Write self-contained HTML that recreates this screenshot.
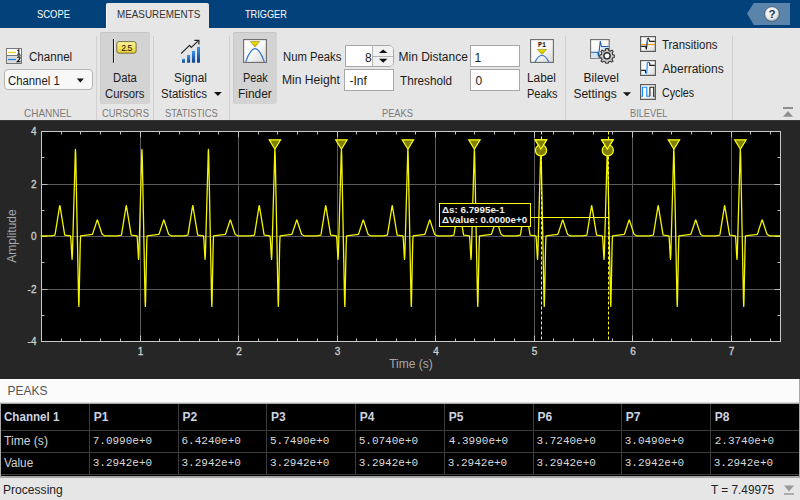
<!DOCTYPE html>
<html><head><meta charset="utf-8">
<style>
*{margin:0;padding:0;box-sizing:border-box}
html,body{width:800px;height:500px;overflow:hidden;background:#e6e6e6;font-family:"Liberation Sans",sans-serif;position:relative}
.a{position:absolute;white-space:nowrap}
.tb{position:absolute;left:0;top:0;width:800px;height:28px;background:#03417a}
.tab{position:absolute;top:10px;font-size:11px;color:#fff;line-height:1;letter-spacing:-0.3px}
.seltab{position:absolute;left:106px;top:3px;width:103px;height:26px;background:#e6e6e6;border-radius:2px 2px 0 0;border-left:1px solid #fafafa}
.lbl{font-size:12px;color:#1a1a1a;line-height:1}
.grp{font-size:10.5px;color:#7a7a7a;line-height:1;letter-spacing:-0.2px}
.sep{position:absolute;top:36px;width:1px;height:84px;background:#d0d0d0}
.press{position:absolute;background:#d3d3d3;border-radius:3px;box-shadow:inset 0 1px 0 #c4c4c4,inset 1px 0 0 #cacaca}
.fld{position:absolute;background:#fff;border:1px solid #a8a8a8}
.tbl{position:absolute;left:1px;top:404px;width:798px;height:72px;background:#000}
.th{font-size:12px;font-weight:bold;color:#c9d3e0;line-height:1}
.td{font-size:12px;color:#d0d0d0;line-height:1}
.mono{font-family:"Liberation Mono",monospace;font-size:10.7px;color:#d0d0d0;line-height:1}
</style></head><body>
<svg width="0" height="0" style="position:absolute"><defs>
<linearGradient id="ig" x1="0" y1="0" x2="1" y2="1"><stop offset="0" stop-color="#ffffff"/><stop offset="0.5" stop-color="#f8f8f8"/><stop offset="1" stop-color="#d8d8d8"/></linearGradient>
<linearGradient id="bg1" x1="0" y1="0" x2="0" y2="1"><stop offset="0" stop-color="#3d95e6"/><stop offset="1" stop-color="#0b3f85"/></linearGradient>
<linearGradient id="yg" x1="0" y1="0" x2="0" y2="1"><stop offset="0" stop-color="#fbf59a"/><stop offset="1" stop-color="#e6cf2c"/></linearGradient>
<linearGradient id="tg" x1="0" y1="0" x2="0" y2="1"><stop offset="0" stop-color="#f2e600"/><stop offset="1" stop-color="#c8b400"/></linearGradient>
</defs></svg>
<div class="tb"></div>
<div class="seltab"></div>
<svg class="a" style="left:745px;top:2px" width="48" height="25">
<path d="M2 11.6 L8.8 1.1 H45 V22.9 H8.8 Z" fill="#5b84aa"/>
<defs><radialGradient id="hg" cx="0.4" cy="0.35" r="0.7"><stop offset="0" stop-color="#fff"/><stop offset="0.7" stop-color="#e6e6e6"/><stop offset="1" stop-color="#9aa"/></radialGradient></defs>
<circle cx="27" cy="12" r="7.3" fill="url(#hg)" stroke="#2a3a55" stroke-width="0.6"/>
<text x="27" y="16.3" text-anchor="middle" font-family="Liberation Sans" font-weight="bold" font-size="11.5" fill="#223058">?</text>
</svg>

<!-- separators -->
<div class="sep" style="left:96px"></div>
<div class="sep" style="left:153px"></div>
<div class="sep" style="left:229px"></div>
<div class="sep" style="left:565px"></div>
<div class="sep" style="left:732px"></div>

<!-- CHANNEL -->
<svg class="a" style="left:6px;top:48px" width="16" height="16">
<rect x="0.5" y="0.5" width="15" height="15" fill="#fdfdfd" stroke="#777"/>
<rect x="1" y="8" width="14" height="7" fill="#dadada"/>
<path d="M0.5 7.5H15.5" stroke="#777"/>
<path d="M2 4.5H10" stroke="#f0d000" stroke-width="1.2"/>
<path d="M2 11.5H10" stroke="#1a7ff0" stroke-width="1.2"/>
<path d="M11.3 2.6 L12.8 1.8 V6.2 M11.2 6.3 H14.3" stroke="#111" stroke-width="1.1" fill="none"/>
<path d="M11.3 9.6 Q12.8 8.4 14 9.3 Q14.6 10.5 11.3 13.7 H14.5" stroke="#111" stroke-width="1.1" fill="none"/>
</svg>
<div class="a" style="left:3.5px;top:69px;width:89px;height:21px;background:#f8f8f8;border:1px solid #b4b4b4;border-radius:4px"></div>
<svg class="a" style="left:76px;top:78px" width="10" height="6"><path d="M0.8 0.6H7.8L4.3 4.5Z" fill="#111"/></svg>

<!-- CURSORS -->
<div class="press" style="left:100px;top:32px;width:50px;height:72px"></div>
<svg class="a" style="left:110px;top:38px" width="30" height="26">
<path d="M3.5 1V24.7" stroke="#1a1a1a" stroke-width="1.1"/><path d="M4.6 1V24.7" stroke="#fff" stroke-width="0.8" opacity="0.8"/>
<rect x="6.8" y="3.6" width="19.3" height="11.6" rx="2.2" fill="url(#yg)" stroke="#6a6440" stroke-width="0.9"/>
<text x="16.6" y="12.7" text-anchor="middle" font-size="8.6" font-family="Liberation Sans" fill="#111" letter-spacing="-0.4">2.5</text>
</svg>

<!-- STATISTICS -->
<svg class="a" style="left:180px;top:39px" width="22" height="25">
<path d="M1.1 14.7 L9.5 6.3 L11.3 8.4 L18.5 1.6" stroke="#262626" stroke-width="1.2" fill="none"/>
<path d="M14.3 1.3 H18.9 V5.6" stroke="#262626" stroke-width="1.2" fill="none"/>
<rect x="2" y="19.8" width="3" height="3.9" fill="url(#bg1)"/>
<rect x="7.1" y="15.9" width="3" height="7.8" fill="url(#bg1)"/>
<rect x="11.9" y="11.9" width="3.2" height="11.8" fill="url(#bg1)"/>
<rect x="17" y="7.8" width="3" height="15.9" fill="url(#bg1)"/>
</svg>
<svg class="a" style="left:213px;top:91px" width="10" height="6"><path d="M1 1H8.8L4.9 5Z" fill="#111"/></svg>

<!-- PEAKS -->
<div class="press" style="left:233px;top:32px;width:44px;height:72px"></div>
<svg class="a" style="left:243px;top:39px" width="24" height="24">
<rect x="0.6" y="0.6" width="22.8" height="22.8" fill="url(#ig)" stroke="#6a6a6a" stroke-width="1.1"/>
<path d="M2.7 22.8 Q12 -3.6 21.3 22.8" stroke="#2f74c4" stroke-width="1.15" fill="none"/>
<path d="M7.4 2.6H16.6L12 7.9Z" fill="url(#tg)" stroke="#8f8400" stroke-width="0.6"/>
</svg>

<div class="fld" style="left:345px;top:45px;width:49px;height:22px;border-radius:0 5px 5px 0"></div>
<div class="a" style="left:372px;top:46px;width:1px;height:20px;background:#b8b8b8"></div>
<div class="a" style="left:373px;top:46px;width:20px;height:20px;background:#f1f1f1;border-radius:0 4px 4px 0"></div>
<svg class="a" style="left:373px;top:46px" width="21" height="21">
<path d="M0 10.5H20" stroke="#b4b4b4" stroke-width="1"/>
<path d="M6 7H14.4L10.2 3.4Z" fill="#111"/>
<path d="M6 12.8H14.4L10.2 16.8Z" fill="#111"/>
</svg>
<div class="fld" style="left:344px;top:69px;width:50px;height:22px"></div>

<div class="fld" style="left:470px;top:45px;width:50px;height:22px"></div>
<div class="fld" style="left:470px;top:69px;width:50px;height:22px"></div>

<svg class="a" style="left:530px;top:39px" width="24" height="24">
<rect x="0.6" y="0.6" width="22.8" height="22.8" fill="url(#ig)" stroke="#6a6a6a" stroke-width="1.1"/>
<path d="M5 23 Q12 9.4 18.8 23" stroke="#2f74c4" stroke-width="1.15" fill="none"/>
<path d="M7.3 10.4H16.5L12 15.4Z" fill="url(#tg)" stroke="#8f8400" stroke-width="0.6"/>
<text x="12" y="7.9" text-anchor="middle" font-size="6.6" font-weight="bold" font-family="Liberation Mono" fill="#111">P1</text>
</svg>

<!-- BILEVEL -->
<svg class="a" style="left:589px;top:39px" width="28" height="26">
<rect x="1.6" y="0.6" width="18.6" height="18.6" fill="url(#ig)" stroke="#6a6a6a" stroke-width="1.1"/>
<path d="M2.2 13.2H8.7V19H2.2Z" fill="#d4e4f2"/><path d="M12.5 7.5H19.7V19H12.5Z" fill="#d4e4f2"/>
<path d="M2.2 13.2 H8.7 L9.5 17.7 L11.3 2.1 L12.5 7.5 H19.7" stroke="#1f5fa8" stroke-width="1.1" fill="none"/>
<g transform="translate(18 16.8)">
<path d="M-1.3 -7.2H1.3L1.7 -5.3 L3.3 -4.6 L5 -5.6 L6.1 -4.5 L5.2 -2.8 L5.6 -1.2 L7.3 -0.6 V1.6 L5.6 2.2 L5 3.7 L6 5.3 L4.8 6.4 L3.2 5.5 L1.6 6.1 L1.2 7.4 H-1.2 L-1.6 6.1 L-3.2 5.5 L-4.8 6.4 L-6 5.3 L-5 3.7 L-5.6 2.2 L-7.3 1.6 V-0.6 L-5.6 -1.2 L-5.2 -2.8 L-6.1 -4.5 L-5 -5.6 L-3.3 -4.6 L-1.7 -5.3Z" fill="#c8c8c8" stroke="#3a3a3a" stroke-width="1.1"/>
<circle r="3.1" fill="#fafafa" stroke="#333" stroke-width="1.5"/></g>
</svg>
<svg class="a" style="left:622px;top:91px" width="10" height="7"><path d="M1 1.2H9L5 5.2Z" fill="#111"/></svg>

<svg class="a" style="left:640px;top:36px" width="16" height="16">
<rect x="0.6" y="0.6" width="14.8" height="14.8" fill="url(#ig)" stroke="#5c5c5c" stroke-width="1.2"/>
<path d="M1.2 8.5H14.8" stroke="#f2a000" stroke-width="1.1"/>
<path d="M1.2 10.4 H5.6 L6.4 13.4 L7.5 2.8 L8.5 2.2 L9.8 5.4 H14.8" stroke="#1e1e1e" stroke-width="1.1" fill="none"/>
<path d="M7.2 9.2 L7.6 3" stroke="#1a8cff" stroke-width="1.2"/>
</svg>
<svg class="a" style="left:640px;top:60px" width="16" height="16">
<rect x="0.6" y="0.6" width="14.8" height="14.8" fill="url(#ig)" stroke="#5c5c5c" stroke-width="1.2"/>
<path d="M1.2 10.4 H5.5 V13 M8.5 2 L9.8 3.5 V5.4 H14.8" stroke="#1e1e1e" stroke-width="1.1" fill="none"/>
<path d="M5.5 13 L6.5 13.4 Q7 13 7.3 3 L8.5 2" stroke="#1a8cff" stroke-width="1.2" fill="none"/>
</svg>
<svg class="a" style="left:640px;top:84px" width="16" height="16">
<rect x="0.6" y="0.6" width="14.8" height="14.8" fill="url(#ig)" stroke="#5c5c5c" stroke-width="1.2"/>
<path d="M1.2 12.2 H2.5 V3.2 H6.8 V12.2 H9.9" stroke="#1a8cff" stroke-width="1.15" fill="none"/>
<path d="M9.9 12.2 V3.2 H13.7 V12.2 H14.8" stroke="#1e1e1e" stroke-width="1.1" fill="none"/>
</svg>

<svg class="a" style="left:781px;top:106px" width="14" height="12">
<path d="M2 2H12" stroke="#8e8e8e" stroke-width="2"/>
<path d="M2 10.8H12L7 5Z" fill="#8e8e8e"/>
</svg>

<svg width="800" height="259" style="position:absolute;left:0;top:120px"><rect x="0" y="0" width="800" height="259" fill="#262626"/><rect x="0" y="0" width="800" height="1" fill="#3a3a3a"/><rect x="41.5" y="11.5" width="739" height="210" fill="#000"/><path d="M140.5 11.5V221.5M238.5 11.5V221.5M337.5 11.5V221.5M435.5 11.5V221.5M534.5 11.5V221.5M632.5 11.5V221.5M731.5 11.5V221.5M41.5 64.50H780.5M41.5 116.50H780.5M41.5 169.50H780.5" stroke="#5a5a5a" stroke-width="1" fill="none"/><path d="M61.5 221.5v-3M61.5 11.5v3M80.5 221.5v-3M80.5 11.5v3M100.5 221.5v-3M100.5 11.5v3M120.5 221.5v-3M120.5 11.5v3M140.5 221.5v-6M140.5 11.5v6M159.5 221.5v-3M159.5 11.5v3M179.5 221.5v-3M179.5 11.5v3M199.5 221.5v-3M199.5 11.5v3M218.5 221.5v-3M218.5 11.5v3M238.5 221.5v-6M238.5 11.5v6M258.5 221.5v-3M258.5 11.5v3M277.5 221.5v-3M277.5 11.5v3M297.5 221.5v-3M297.5 11.5v3M317.5 221.5v-3M317.5 11.5v3M337.5 221.5v-6M337.5 11.5v6M356.5 221.5v-3M356.5 11.5v3M376.5 221.5v-3M376.5 11.5v3M396.5 221.5v-3M396.5 11.5v3M415.5 221.5v-3M415.5 11.5v3M435.5 221.5v-6M435.5 11.5v6M455.5 221.5v-3M455.5 11.5v3M474.5 221.5v-3M474.5 11.5v3M494.5 221.5v-3M494.5 11.5v3M514.5 221.5v-3M514.5 11.5v3M534.5 221.5v-6M534.5 11.5v6M553.5 221.5v-3M553.5 11.5v3M573.5 221.5v-3M573.5 11.5v3M593.5 221.5v-3M593.5 11.5v3M612.5 221.5v-3M612.5 11.5v3M632.5 221.5v-6M632.5 11.5v6M652.5 221.5v-3M652.5 11.5v3M671.5 221.5v-3M671.5 11.5v3M691.5 221.5v-3M691.5 11.5v3M711.5 221.5v-3M711.5 11.5v3M731.5 221.5v-6M731.5 11.5v6M750.5 221.5v-3M750.5 11.5v3M770.5 221.5v-3M770.5 11.5v3M41.5 195.50h3M780.5 195.50h-3M41.5 169.50h6M780.5 169.50h-6M41.5 142.50h3M780.5 142.50h-3M41.5 116.50h6M780.5 116.50h-6M41.5 90.50h3M780.5 90.50h-3M41.5 64.50h6M780.5 64.50h-6M41.5 37.50h3M780.5 37.50h-3" stroke="#c0c0c0" stroke-width="1" fill="none"/><rect x="41.5" y="11.5" width="739" height="210" fill="none" stroke="#c8c8c8" stroke-width="1"/><g font-family="Liberation Sans" font-size="10" fill="#cfcfcf" stroke="#cfcfcf" stroke-width="0.3"><text x="140.5" y="235" text-anchor="middle">1</text><text x="239.0" y="235" text-anchor="middle">2</text><text x="337.5" y="235" text-anchor="middle">3</text><text x="436.0" y="235" text-anchor="middle">4</text><text x="534.5" y="235" text-anchor="middle">5</text><text x="633.0" y="235" text-anchor="middle">6</text><text x="731.5" y="235" text-anchor="middle">7</text><text x="36.5" y="15.0" text-anchor="end">4</text><text x="36.5" y="67.5" text-anchor="end">2</text><text x="36.5" y="120.0" text-anchor="end">0</text><text x="36.5" y="172.5" text-anchor="end">-2</text><text x="36.5" y="225.0" text-anchor="end">-4</text></g><text x="411" y="247.5" text-anchor="middle" font-family="Liberation Sans" font-size="12" fill="#a8a8a8">Time (s)</text><text transform="translate(16.2 116) rotate(-90)" text-anchor="middle" font-family="Liberation Sans" font-size="12" fill="#a8a8a8">Amplitude</text><g transform="translate(0 -120)"><polyline points="41.10,235.90 50.80,235.90 54.84,235.08 55.23,233.57 59.57,206.31 59.84,205.57 60.06,206.31 64.67,234.80 64.89,235.15 70.45,235.87 70.58,236.19 70.87,239.06 71.96,258.03 72.13,259.32 72.42,254.42 75.28,152.79 75.48,149.43 75.75,155.39 78.60,300.47 78.85,306.45 79.07,301.67 80.23,243.95 80.60,235.93 92.34,234.31 92.71,233.59 97.22,219.98 97.37,219.98 97.54,220.30 101.90,233.66 102.37,234.48 104.63,235.77 105.08,235.90 117.27,235.90 121.25,235.16 121.48,234.73 121.70,233.72 126.06,206.31 126.20,205.69 126.35,205.60 131.15,234.80 131.38,235.15 136.94,235.87 137.06,236.19 137.36,239.06 138.44,258.03 138.62,259.32 138.91,254.42 141.77,152.79 141.96,149.43 142.23,155.39 145.09,300.47 145.34,306.45 145.56,301.67 146.72,243.95 147.09,235.93 158.83,234.31 159.20,233.59 163.71,219.98 163.86,219.98 164.03,220.30 168.39,233.66 168.85,234.48 171.12,235.77 171.56,235.90 183.75,235.90 187.74,235.16 187.96,234.73 188.19,233.72 192.54,206.31 192.69,205.69 192.84,205.60 197.64,234.80 197.86,235.15 203.43,235.87 203.55,236.19 203.85,239.06 204.93,258.03 205.10,259.32 205.40,254.42 208.25,152.79 208.45,149.43 208.72,155.39 211.58,300.47 211.83,306.45 212.05,301.67 213.20,243.95 213.57,235.93 225.32,234.31 225.69,233.59 230.20,219.98 230.34,219.98 230.52,220.30 234.87,233.66 235.34,234.48 237.61,235.77 238.05,235.90 250.24,235.90 254.23,235.16 254.45,234.73 254.67,233.72 259.03,206.31 259.18,205.69 259.33,205.60 264.13,234.80 264.35,235.15 269.92,235.87 270.04,236.19 270.33,239.06 271.42,258.03 271.59,259.32 271.89,254.42 274.74,152.79 274.94,149.43 275.21,155.39 278.07,300.47 278.31,306.45 278.53,301.67 279.69,243.95 280.06,235.93 291.81,234.31 292.18,233.59 296.68,219.98 296.83,219.98 297.00,220.30 301.36,233.66 301.83,234.48 304.10,235.77 304.54,235.90 316.73,235.90 320.72,235.16 320.94,234.73 321.16,233.72 325.52,206.31 325.67,205.69 325.81,205.60 330.62,234.80 330.84,235.15 336.40,235.87 336.53,236.19 336.82,239.06 337.91,258.03 338.08,259.32 338.37,254.42 341.23,152.79 341.43,149.43 341.70,155.39 344.55,300.47 344.80,306.45 345.02,301.67 346.18,243.95 346.55,235.93 358.29,234.31 358.66,233.59 363.17,219.98 363.32,219.98 363.49,220.30 367.85,233.66 368.32,234.48 370.58,235.77 371.03,235.90 383.22,235.90 387.20,235.16 387.43,234.73 387.65,233.72 392.01,206.31 392.15,205.69 392.30,205.60 397.10,234.80 397.33,235.15 402.89,235.87 403.01,236.19 403.31,239.06 404.39,258.03 404.56,259.32 404.86,254.42 407.72,152.79 407.91,149.43 408.18,155.39 411.04,300.47 411.29,306.45 411.51,301.67 412.67,243.95 413.04,235.93 424.78,234.31 425.15,233.59 429.66,219.98 429.81,219.98 429.98,220.30 434.34,233.66 434.80,234.48 437.07,235.77 437.51,235.90 449.70,235.90 453.69,235.16 453.91,234.73 454.14,233.72 458.49,206.31 458.64,205.69 458.79,205.60 463.59,234.80 463.81,235.15 469.38,235.87 469.50,236.19 469.80,239.06 470.88,258.03 471.05,259.32 471.35,254.42 474.20,152.79 474.40,149.43 474.67,155.39 477.53,300.47 477.78,306.45 478.00,301.67 479.15,243.95 479.52,235.93 491.27,234.31 491.64,233.59 496.15,219.98 496.29,219.98 496.47,220.30 500.82,233.66 501.29,234.48 503.56,235.77 504.00,235.90 516.19,235.90 520.18,235.16 520.40,234.73 520.62,233.72 524.98,206.31 525.13,205.69 525.28,205.60 530.08,234.80 530.30,235.15 535.87,235.87 535.99,236.19 536.28,239.06 537.37,258.03 537.54,259.32 537.84,254.42 540.69,152.79 540.89,149.43 541.16,155.39 544.02,300.47 544.26,306.45 544.48,301.67 545.64,243.95 546.01,235.93 557.76,234.31 558.13,233.59 562.63,219.98 562.78,219.98 562.95,220.30 567.31,233.66 567.78,234.48 570.05,235.77 570.49,235.90 582.68,235.90 586.67,235.16 586.89,234.73 587.11,233.72 591.47,206.31 591.62,205.69 591.76,205.60 596.57,234.80 596.79,235.15 602.35,235.87 602.48,236.19 602.77,239.06 603.86,258.03 604.03,259.32 604.32,254.42 607.18,152.79 607.38,149.43 607.65,155.39 610.50,300.47 610.75,306.45 610.97,301.67 612.13,243.95 612.50,235.93 624.24,234.31 624.61,233.59 629.12,219.98 629.27,219.98 629.44,220.30 633.80,233.66 634.27,234.48 636.53,235.77 636.98,235.90 649.17,235.90 653.15,235.16 653.38,234.73 653.60,233.72 657.96,206.31 658.10,205.69 658.25,205.60 663.05,234.80 663.28,235.15 668.84,235.87 668.96,236.19 669.26,239.06 670.34,258.03 670.51,259.32 670.81,254.42 673.67,152.79 673.86,149.43 674.13,155.39 676.99,300.47 677.24,306.45 677.46,301.67 678.62,243.95 678.99,235.93 690.73,234.31 691.10,233.59 695.61,219.98 695.76,219.98 695.93,220.30 700.29,233.66 700.75,234.48 703.02,235.77 703.46,235.90 715.65,235.90 719.64,235.16 719.86,234.73 720.09,233.72 724.44,206.31 724.59,205.69 724.74,205.60 729.54,234.80 729.76,235.15 735.33,235.87 735.45,236.19 735.75,239.06 736.83,258.03 737.00,259.32 737.30,254.42 740.15,152.79 740.35,149.43 740.62,155.39 743.48,300.47 743.73,306.45 743.95,301.67 745.10,243.95 745.30,238.02 745.50,235.87 757.22,234.31 757.59,233.59 761.92,220.30 762.17,219.94 762.42,220.30 766.77,233.66 767.19,234.45 769.88,235.89 779.85,235.90" fill="none" stroke="#f4f400" stroke-width="1.3" stroke-linejoin="round" stroke-linecap="round"/></g><path d="M541.5 11.5V221.5" stroke="#ffff10" stroke-width="1" stroke-dasharray="3 2"/><path d="M608.5 11.5V221.5" stroke="#ffff10" stroke-width="1" stroke-dasharray="3 2"/><path d="M269.2 19.80000000000001H280.6L274.9 29.19999999999999Z" fill="#7f7f00" stroke="#ffff10" stroke-width="1.2"/><path d="M335.7 19.80000000000001H347.1L341.4 29.19999999999999Z" fill="#7f7f00" stroke="#ffff10" stroke-width="1.2"/><path d="M402.2 19.80000000000001H413.6L407.9 29.19999999999999Z" fill="#7f7f00" stroke="#ffff10" stroke-width="1.2"/><path d="M468.7 19.80000000000001H480.1L474.4 29.19999999999999Z" fill="#7f7f00" stroke="#ffff10" stroke-width="1.2"/><path d="M535.2 19.80000000000001H546.6L540.9 29.19999999999999Z" fill="#7f7f00" stroke="#ffff10" stroke-width="1.2"/><path d="M601.7 19.80000000000001H613.1L607.4 29.19999999999999Z" fill="#7f7f00" stroke="#ffff10" stroke-width="1.2"/><path d="M668.2 19.80000000000001H679.6L673.9 29.19999999999999Z" fill="#7f7f00" stroke="#ffff10" stroke-width="1.2"/><path d="M734.7 19.80000000000001H746.1L740.4 29.19999999999999Z" fill="#7f7f00" stroke="#ffff10" stroke-width="1.2"/><circle cx="541.0" cy="30.30000000000001" r="5.6" fill="#7f7f00" stroke="#ffff10" stroke-width="1.2"/><circle cx="607.8" cy="30.30000000000001" r="5.6" fill="#7f7f00" stroke="#ffff10" stroke-width="1.2"/><path d="M535.2 19.80000000000001H546.6L540.9 29.19999999999999Z" fill="#7f7f00" stroke="#ffff10" stroke-width="1.2"/><path d="M601.7 19.80000000000001H613.1L607.4 29.19999999999999Z" fill="#7f7f00" stroke="#ffff10" stroke-width="1.2"/><path d="M530.5 97.5H608.5" stroke="#ffff10" stroke-width="1"/><rect x="439.5" y="83.5" width="91" height="23" fill="#000" stroke="#ffff10" stroke-width="1"/><g font-family="Liberation Sans" font-weight="bold" font-size="9.2" fill="#f0f0f0"><text transform="translate(442 92.80000000000001) scale(1.065 1)">&#916;s: 6.7995e-1</text><text transform="translate(442 103.4) scale(1.065 1)">&#916;Value: 0.0000e+0</text></g></svg>

<!-- PEAKS panel -->
<div class="a" style="left:0;top:379px;width:799px;height:25px;background:#fbfbfb"></div><div class="a" style="left:0;top:402px;width:799px;height:1px;background:#d8d8d8"></div><div class="a" style="left:0;top:403px;width:799px;height:1px;background:#a8a8a8"></div>
<div class="a" style="left:799px;top:379px;width:1px;height:99px;background:#a8a8a8"></div><div class="a" style="left:0;top:404px;width:1px;height:72px;background:#a8a8a8"></div>
<div class="tbl"></div>
<div class="a" style="left:89px;top:404px;width:1px;height:71px;background:#3c3c3c"></div>
<div class="a" style="left:178px;top:404px;width:1px;height:71px;background:#3c3c3c"></div>
<div class="a" style="left:266px;top:404px;width:1px;height:71px;background:#3c3c3c"></div>
<div class="a" style="left:355px;top:404px;width:1px;height:71px;background:#3c3c3c"></div>
<div class="a" style="left:444px;top:404px;width:1px;height:71px;background:#3c3c3c"></div>
<div class="a" style="left:533px;top:404px;width:1px;height:71px;background:#3c3c3c"></div>
<div class="a" style="left:621px;top:404px;width:1px;height:71px;background:#3c3c3c"></div>
<div class="a" style="left:710px;top:404px;width:1px;height:71px;background:#3c3c3c"></div>
<div class="a" style="left:1px;top:430px;width:798px;height:1px;background:#3c3c3c"></div>
<div class="a" style="left:1px;top:452px;width:798px;height:1px;background:#3c3c3c"></div>
<div class="a" style="left:1px;top:474px;width:798px;height:1px;background:#3c3c3c"></div>
<div class="a" style="left:0;top:476px;width:800px;height:2px;background:#a8a8a8"></div>
<svg class="a" style="left:783px;top:484px" width="12" height="12">
<path d="M1 1.5H11L6 7.5Z" fill="#9a9a9a"/>
<path d="M1 10H11" stroke="#9a9a9a" stroke-width="1.5"/>
</svg>
<div class="a" style="left:36.90px;top:9.00px;line-height:1;font-size:11px;color:#fff;transform:scaleX(0.8553);transform-origin:0 0">SCOPE</div>
<div class="a" style="left:117.10px;top:9.00px;line-height:1;font-size:11px;color:#333;transform:scaleX(0.8967);transform-origin:0 0">MEASUREMENTS</div>
<div class="a" style="left:244.50px;top:9.00px;line-height:1;font-size:11px;color:#fff;transform:scaleX(0.8350);transform-origin:0 0">TRIGGER</div>
<div class="a" style="left:28.50px;top:51.00px;line-height:1;font-size:12px;color:#1b1b1b;transform:scaleX(0.9659);transform-origin:0 0">Channel</div>
<div class="a" style="left:8.00px;top:74.50px;line-height:1;font-size:12px;color:#1b1b1b;transform:scaleX(0.9455);transform-origin:0 0">Channel 1</div>
<div class="a" style="left:112.56px;top:72.00px;line-height:1;font-size:12px;color:#1b1b1b;transform:scaleX(0.9400);transform-origin:0 0">Data</div>
<div class="a" style="left:105.40px;top:88.00px;line-height:1;font-size:12px;color:#1b1b1b;transform:scaleX(0.9405);transform-origin:0 0">Cursors</div>
<div class="a" style="left:174.02px;top:72.00px;line-height:1;font-size:12px;color:#1b1b1b;transform:scaleX(0.9844);transform-origin:0 0">Signal</div>
<div class="a" style="left:161.44px;top:88.00px;line-height:1;font-size:12px;color:#1b1b1b;transform:scaleX(0.9596);transform-origin:0 0">Statistics</div>
<div class="a" style="left:242.60px;top:72.00px;line-height:1;font-size:12px;color:#1b1b1b;transform:scaleX(0.9038);transform-origin:0 0">Peak</div>
<div class="a" style="left:238.21px;top:88.00px;line-height:1;font-size:12px;color:#1b1b1b;transform:scaleX(0.9939);transform-origin:0 0">Finder</div>
<div class="a" style="left:282.56px;top:51.00px;line-height:1;font-size:12px;color:#1b1b1b;transform:scaleX(0.9410);transform-origin:0 0">Num Peaks</div>
<div class="a" style="left:282.49px;top:74.30px;line-height:1;font-size:12px;color:#1b1b1b;transform:scaleX(1.0088);transform-origin:0 0">Min Height</div>
<div class="a" style="left:398.50px;top:51.00px;line-height:1;font-size:12px;color:#1b1b1b">Min Distance</div>
<div class="a" style="left:399.50px;top:74.50px;line-height:1;font-size:12px;color:#1b1b1b;transform:scaleX(0.9755);transform-origin:0 0">Threshold</div>
<div class="a" style="left:365.00px;top:51.50px;line-height:1;font-size:12px;color:#1b1b1b">8</div>
<div class="a" style="left:349.50px;top:74.50px;line-height:1;font-size:12px;color:#1b1b1b">-Inf</div>
<div class="a" style="left:474.50px;top:51.50px;line-height:1;font-size:12px;color:#1b1b1b">1</div>
<div class="a" style="left:475.50px;top:74.50px;line-height:1;font-size:12px;color:#1b1b1b">0</div>
<div class="a" style="left:527.41px;top:72.00px;line-height:1;font-size:12px;color:#1b1b1b;transform:scaleX(0.9857);transform-origin:0 0">Label</div>
<div class="a" style="left:526.78px;top:88.00px;line-height:1;font-size:12px;color:#1b1b1b;transform:scaleX(0.9156);transform-origin:0 0">Peaks</div>
<div class="a" style="left:583.60px;top:72.00px;line-height:1;font-size:12px;color:#1b1b1b">Bilevel</div>
<div class="a" style="left:573.40px;top:88.00px;line-height:1;font-size:12px;color:#1b1b1b">Settings</div>
<div class="a" style="left:662.30px;top:38.70px;line-height:1;font-size:12px;color:#1b1b1b;transform:scaleX(0.9534);transform-origin:0 0">Transitions</div>
<div class="a" style="left:662.30px;top:62.90px;line-height:1;font-size:12px;color:#1b1b1b">Aberrations</div>
<div class="a" style="left:662.30px;top:86.70px;line-height:1;font-size:12px;color:#1b1b1b;transform:scaleX(0.8944);transform-origin:0 0">Cycles</div>
<div class="a" style="left:24.00px;top:107.80px;line-height:1;font-size:11px;color:#7a7a7a;transform:scaleX(0.9057);transform-origin:0 0">CHANNEL</div>
<div class="a" style="left:101.70px;top:107.80px;line-height:1;font-size:11px;color:#7a7a7a;transform:scaleX(0.8527);transform-origin:0 0">CURSORS</div>
<div class="a" style="left:165.00px;top:107.80px;line-height:1;font-size:11px;color:#7a7a7a;transform:scaleX(0.8516);transform-origin:0 0">STATISTICS</div>
<div class="a" style="left:382.16px;top:107.80px;line-height:1;font-size:11px;color:#7a7a7a;transform:scaleX(0.8429);transform-origin:0 0">PEAKS</div>
<div class="a" style="left:629.66px;top:107.80px;line-height:1;font-size:11px;color:#7a7a7a;transform:scaleX(0.8386);transform-origin:0 0">BILEVEL</div>
<div class="a" style="left:7.50px;top:385.20px;line-height:1;font-size:12px;color:#555">PEAKS</div>
<div class="a" style="left:2.59px;top:484.00px;line-height:1;font-size:12px;color:#222;transform:scaleX(1.0069);transform-origin:0 0">Processing</div>
<div class="a" style="left:711.00px;top:484.00px;line-height:1;font-size:12px;color:#222;transform:scaleX(0.9844);transform-origin:0 0">T = 7.49975</div>
<div class="a" style="left:4.20px;top:411.00px;line-height:1;font-size:12px;font-weight:bold;color:#cdd5e2;transform:scaleX(0.9655);transform-origin:0 0">Channel 1</div>
<div class="a" style="left:4.20px;top:435.10px;line-height:1;font-size:12px;color:#d4d4d4;transform:scaleX(1.0093);transform-origin:0 0">Time (s)</div>
<div class="a" style="left:4.20px;top:457.20px;line-height:1;font-size:12px;color:#d4d4d4;transform:scaleX(0.9800);transform-origin:0 0">Value</div>
<div class="a" style="left:93.70px;top:411.00px;line-height:1;font-size:12px;font-weight:bold;color:#cdd5e2">P1</div>
<div class="a" style="left:92.70px;top:436.20px;line-height:1;font-family:Liberation Mono;font-size:11px;color:#dadada">7.0990e+0</div>
<div class="a" style="left:92.70px;top:458.00px;line-height:1;font-family:Liberation Mono;font-size:11px;color:#dadada">3.2942e+0</div>
<div class="a" style="left:182.50px;top:411.00px;line-height:1;font-size:12px;font-weight:bold;color:#cdd5e2">P2</div>
<div class="a" style="left:181.50px;top:436.20px;line-height:1;font-family:Liberation Mono;font-size:11px;color:#dadada">6.4240e+0</div>
<div class="a" style="left:181.50px;top:458.00px;line-height:1;font-family:Liberation Mono;font-size:11px;color:#dadada">3.2942e+0</div>
<div class="a" style="left:271.00px;top:411.00px;line-height:1;font-size:12px;font-weight:bold;color:#cdd5e2">P3</div>
<div class="a" style="left:270.00px;top:436.20px;line-height:1;font-family:Liberation Mono;font-size:11px;color:#dadada">5.7490e+0</div>
<div class="a" style="left:270.00px;top:458.00px;line-height:1;font-family:Liberation Mono;font-size:11px;color:#dadada">3.2942e+0</div>
<div class="a" style="left:359.70px;top:411.00px;line-height:1;font-size:12px;font-weight:bold;color:#cdd5e2">P4</div>
<div class="a" style="left:358.70px;top:436.20px;line-height:1;font-family:Liberation Mono;font-size:11px;color:#dadada">5.0740e+0</div>
<div class="a" style="left:358.70px;top:458.00px;line-height:1;font-family:Liberation Mono;font-size:11px;color:#dadada">3.2942e+0</div>
<div class="a" style="left:448.80px;top:411.00px;line-height:1;font-size:12px;font-weight:bold;color:#cdd5e2">P5</div>
<div class="a" style="left:448.80px;top:436.20px;line-height:1;font-family:Liberation Mono;font-size:11px;color:#dadada">4.3990e+0</div>
<div class="a" style="left:447.80px;top:458.00px;line-height:1;font-family:Liberation Mono;font-size:11px;color:#dadada">3.2942e+0</div>
<div class="a" style="left:537.50px;top:411.00px;line-height:1;font-size:12px;font-weight:bold;color:#cdd5e2">P6</div>
<div class="a" style="left:536.50px;top:436.20px;line-height:1;font-family:Liberation Mono;font-size:11px;color:#dadada">3.7240e+0</div>
<div class="a" style="left:536.50px;top:458.00px;line-height:1;font-family:Liberation Mono;font-size:11px;color:#dadada">3.2942e+0</div>
<div class="a" style="left:625.70px;top:411.00px;line-height:1;font-size:12px;font-weight:bold;color:#cdd5e2">P7</div>
<div class="a" style="left:624.70px;top:436.20px;line-height:1;font-family:Liberation Mono;font-size:11px;color:#dadada">3.0490e+0</div>
<div class="a" style="left:624.70px;top:458.00px;line-height:1;font-family:Liberation Mono;font-size:11px;color:#dadada">3.2942e+0</div>
<div class="a" style="left:714.70px;top:411.00px;line-height:1;font-size:12px;font-weight:bold;color:#cdd5e2">P8</div>
<div class="a" style="left:714.70px;top:436.20px;line-height:1;font-family:Liberation Mono;font-size:11px;color:#dadada">2.3740e+0</div>
<div class="a" style="left:713.70px;top:458.00px;line-height:1;font-family:Liberation Mono;font-size:11px;color:#dadada">3.2942e+0</div>
</body></html>
